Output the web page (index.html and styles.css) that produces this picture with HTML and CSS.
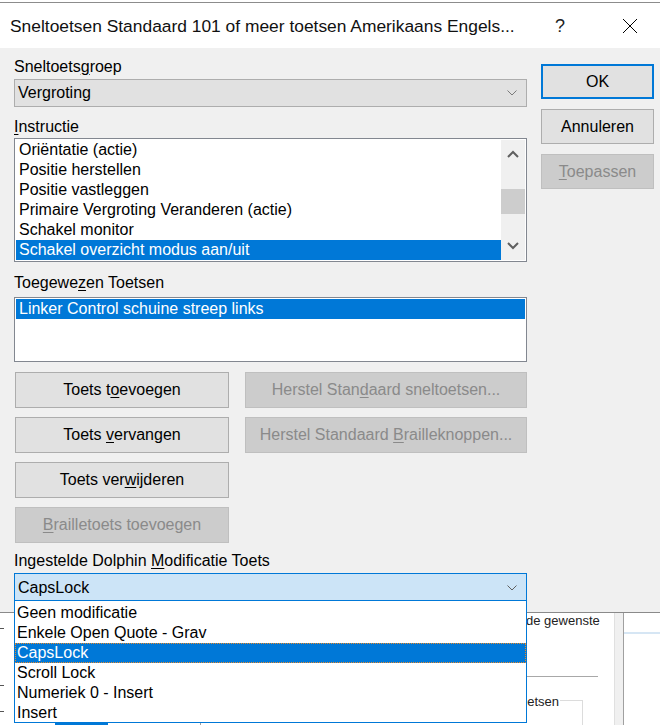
FILE: index.html
```html
<!DOCTYPE html>
<html lang="nl">
<head>
<meta charset="utf-8">
<title>Sneltoetsen</title>
<link rel="stylesheet" href="styles.css">
</head>
<body>
<div class="dialog">
  <div class="titlebar">
    <span class="title">Sneltoetsen Standaard 101 of meer toetsen Amerikaans Engels...</span>
    <span class="help">?</span>
    <span class="close"><svg width="16" height="16" viewBox="0 0 16 16"><path d="M1 1 L15 15 M15 1 L1 15" stroke="#000" stroke-width="1" fill="none"/></svg></span>
  </div>
  <div class="content">
    <div class="left">
      <div class="lbl">Sneltoets<u>g</u>roep</div>
      <div class="combo">
        <span>Vergroting</span>
        <svg class="chev" width="10" height="6" viewBox="0 0 10 6"><path d="M0.5 0.5 L5 5 L9.5 0.5" stroke="#7a7a7a" fill="none"/></svg>
      </div>
      <div class="lbl lbl2"><u>I</u>nstructie</div>
      <div class="listbox lb1">
        <div class="items">
          <div class="item">Oriëntatie (actie)</div>
          <div class="item">Positie herstellen</div>
          <div class="item">Positie vastleggen</div>
          <div class="item">Primaire Vergroting Veranderen (actie)</div>
          <div class="item">Schakel monitor</div>
          <div class="item sel">Schakel overzicht modus aan/uit</div>
        </div>
        <div class="vscroll">
          <div class="sbtn"><svg width="12" height="8" viewBox="0 0 12 8"><path d="M1 7 L6 2 L11 7" stroke="#606060" stroke-width="2" fill="none"/></svg></div>
          <div class="track"><div class="thumb"></div></div>
          <div class="sbtn"><svg width="12" height="8" viewBox="0 0 12 8"><path d="M1 1 L6 6 L11 1" stroke="#606060" stroke-width="2" fill="none"/></svg></div>
        </div>
      </div>
      <div class="lbl lbl3">Toegewe<u>z</u>en Toetsen</div>
      <div class="listbox lb2">
        <div class="item sel">Linker Control schuine streep links</div>
      </div>
      <div class="btngrid">
        <div class="btn"><span>Toets t<u>o</u>evoegen</span></div>
        <div class="btn dis"><span>Herstel Stan<u>d</u>aard sneltoetsen...</span></div>
        <div class="btn"><span>Toets <u>v</u>ervangen</span></div>
        <div class="btn dis"><span>Herstel Standaard <u>B</u>railleknoppen...</span></div>
        <div class="btn"><span>Toets ver<u>w</u>ijderen</span></div>
        <div class="empty"></div>
        <div class="btn dis"><span><u>B</u>railletoets toevoegen</span></div>
      </div>
      <div class="lbl lbl4">Ingestelde Dolphin <u>M</u>odificatie Toets</div>
      <div class="combo active">
        <span>CapsLock</span>
        <svg class="chev" width="10" height="6" viewBox="0 0 10 6"><path d="M0.5 0.5 L5 5 L9.5 0.5" stroke="#606060" fill="none"/></svg>
        <div class="dropdown">
          <div class="item">Geen modificatie</div>
          <div class="item">Enkele Open Quote - Grav</div>
          <div class="item sel focus">CapsLock</div>
          <div class="item">Scroll Lock</div>
          <div class="item">Numeriek 0 - Insert</div>
          <div class="item">Insert</div>
        </div>
      </div>
    </div>
    <div class="right">
      <div class="btn ok"><span>OK</span></div>
      <div class="btn"><span>Annuleren</span></div>
      <div class="btn dis"><span><u>T</u>oepassen</span></div>
    </div>
  </div>
</div>
<div class="backdrop">
  <div class="bg-text t1">de gewenste</div>
  <div class="bg-line l1"></div>
  <div class="bg-text t2">oetsen</div>
  <div class="bg-group"></div>
  <div class="bg-strip"></div>
  <div class="bg-blue"></div>
  <div class="bg-tab"></div>
  <div class="bg-vline"></div>
  <div class="bg-mark m1"></div>
  <div class="bg-mark m2"></div>
  <div class="bg-mark m3"></div>
</div>
</body>
</html>
```

FILE: styles.css
```css
* { box-sizing: border-box; }
html, body { margin: 0; padding: 0; }
body {
  width: 660px;
  height: 725px;
  overflow: hidden;
  background: #ffffff;
  font-family: "Liberation Sans", Arial, sans-serif;
  font-size: 16px;
  color: #000;
  position: relative;
}
u { text-decoration: underline; text-underline-offset: 2px; }

.dialog {
  margin-top: 2px;
  height: 611px;
  background: #f0f0f0;
  border-top: 1px solid #8c8c8c;
  border-bottom: 1px solid #8a8a8a;
  position: relative;
  z-index: 2;
}
.titlebar {
  height: 45px;
  background: #fff;
  display: flex;
  align-items: center;
  padding-left: 10px;
}
.title {
  flex: none;
  width: 527px;
  overflow: hidden;
  font-size: 17.4px;
  white-space: nowrap;
  padding-top: 2px;
  color: #111;
}
.help {
  flex: none;
  width: 46px;
  text-align: center;
  font-size: 18px;
  color: #222;
  padding-top: 2px;
}
.close {
  flex: none;
  width: 46px;
  margin-left: 24px;
  display: flex;
  justify-content: center;
  align-items: center;
}

.content {
  display: flex;
  gap: 14px;
  padding: 9px 6px 0 14px;
}
.left { width: 513px; display: flex; flex-direction: column; }
.right { width: 113px; margin-top: 7px; display: flex; flex-direction: column; gap: 10px; }

.lbl { height: 20px; line-height: 20px; white-space: nowrap; }
.lbl2 { margin-top: 10px; }
.lbl3 { margin-top: 11px; }
.lbl4 { margin-top: 8px; }

.combo {
  position: relative;
  height: 28px;
  margin-top: 2px;
  background: #e1e1e1;
  border: 1px solid #adadad;
  display: flex;
  align-items: center;
  padding-left: 3px;
}
.combo span { flex: 1; }
.combo .chev { margin-right: 9px; }
.combo.active {
  height: 29px;
  background: #cce4f7;
  border-color: #0078d7;
}

.listbox {
  background: #fff;
  border: 1px solid #828790;
  padding: 1px;
}
.lb1 { margin-top: 1px; height: 124px; display: flex; }
.lb1 .items { flex: 1; }
.lb2 { margin-top: 4px; height: 65px; }
.item {
  height: 20px;
  line-height: 20px;
  padding-left: 3px;
  white-space: nowrap;
}
.item.sel { background: #0078d7; color: #fff; }

.vscroll {
  width: 24px;
  background: #f0f0f0;
  display: flex;
  flex-direction: column;
}
.sbtn { height: 28px; display: flex; align-items: center; justify-content: center; }
.track { flex: 1; padding-top: 21px; }
.thumb { height: 25px; background: #cdcdcd; }

.btngrid {
  margin-top: 10px;
  display: grid;
  grid-template-columns: 214px 282px;
  column-gap: 16px;
  row-gap: 9px;
  grid-auto-rows: 36px;
  margin-left: 1px;
}
.btn {
  background: #e1e1e1;
  border: 1px solid #adadad;
  display: flex;
  align-items: center;
  justify-content: center;
  white-space: nowrap;
}
.btn.dis { background: #cccccc; border-color: #bfbfbf; color: #8a8a8a; }
.right .btn { height: 35px; }
.btn.ok { border: 2px solid #0078d7; }

.dropdown {
  position: absolute;
  left: -1px;
  right: -1px;
  top: calc(100% - 1px);
  height: 123px;
  padding-top: 2px;
  background: #fff;
  border: 1px solid #0078d7;
  z-index: 5;
  overflow: hidden;
}
.dropdown .item { padding-left: 2px; }
.dropdown .item.focus { outline: 1px dotted #e88a2a; outline-offset: -1px; }

.backdrop { position: absolute; left: 0; top: 613px; width: 660px; height: 112px; z-index: 1; }
.bg-text { position: absolute; font-size: 13px; color: #222; white-space: nowrap; }
.t1 { left: 526px; top: 0px; }
.t2 { left: 520px; top: 81px; }
.bg-line { position: absolute; height: 1px; background: #a8a8a8; }
.l1 { left: 520px; top: 63px; width: 78px; }
.bg-group { position: absolute; left: 560px; top: 87px; width: 23px; height: 30px; border-top: 1px solid #dcdcdc; border-right: 1px solid #dcdcdc; }
.bg-strip { position: absolute; left: 614px; top: 0; width: 10px; height: 112px; background: #f0f0f0; border-left: 1px solid #e0e0e0; border-right: 1px solid #a0a0a0; }
.bg-blue { position: absolute; left: 624px; top: 19px; width: 36px; height: 2px; background: #d6e6f4; }
.bg-tab { position: absolute; left: 55px; top: 107px; width: 53px; height: 5px; background: #0078d7; }
.bg-vline { position: absolute; left: 200px; top: 106px; width: 1px; height: 6px; background: #a0a0a0; }
.bg-mark { position: absolute; left: 0; width: 4px; height: 1px; background: #555; }
.m1 { top: 15px; }
.m2 { top: 72px; }
.m3 { top: 98px; }
```
